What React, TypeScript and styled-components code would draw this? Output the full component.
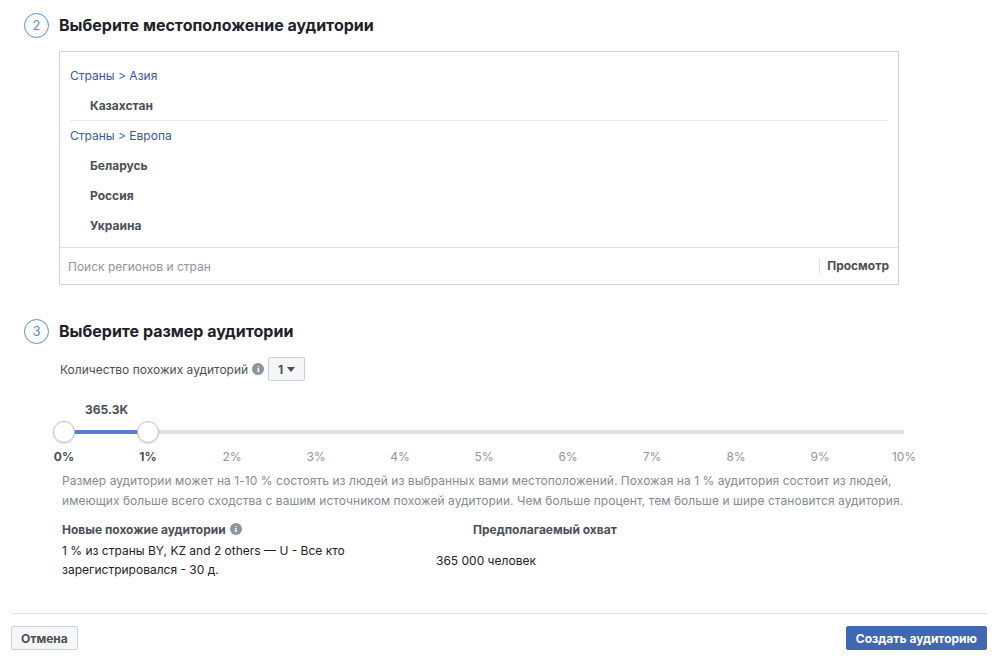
import React from 'react';
import styled, { createGlobalStyle } from 'styled-components';

const GlobalStyle = createGlobalStyle`
    body {
        margin: 0;
        background: #fff;
        font-family: Inter, "Liberation Sans", Helvetica, Arial, sans-serif;
        color: #1d2129;
    }
`;

const Page = styled.div`
    width: 998px;
    height: 663px;
    box-sizing: border-box;
    padding: 12px 11px 0 11px;
    display: flex;
    flex-direction: column;
`;

const Section = styled.section`
    padding-left: 13px;
`;

const StepHeader = styled.div`
    display: flex;
    align-items: center;
    gap: 10px;
    height: 26px;
`;

const StepCircle = styled.div`
    width: 23px;
    height: 23px;
    border: 1.5px solid #5890c8;
    border-radius: 50%;
    display: flex;
    align-items: center;
    justify-content: center;
    color: #5890c8;
    font-size: 13px;
`;

const StepTitle = styled.h2`
    margin: 0;
    font-size: 16px;
    font-weight: bold;
    color: #1d2129;
`;

const LocationBox = styled.div`
    margin: 13px 0 0 35px;
    width: 840px;
    box-sizing: border-box;
    border: 1px solid #ccd0d5;
`;

const LocationList = styled.div`
    padding: 8px 10px 7px 10px;
`;

const Row = styled.div<{ $divider?: boolean }>`
    height: 30px;
    display: flex;
    align-items: center;
    font-size: 12px;
    border-top: ${p => (p.$divider ? '1px solid #e5e5e5' : 'none')};
    box-sizing: border-box;
`;

const Crumb = styled.span`
    color: #385898;
`;

const Country = styled.span`
    padding-left: 20px;
    font-weight: bold;
    color: #4b4f56;
`;

const SearchRow = styled.div`
    height: 36px;
    border-top: 1px solid #dddfe2;
    display: flex;
    align-items: center;
    padding: 0 9px 0 8px;
    font-size: 12px;
`;

const SearchInput = styled.span`
    flex: 1;
    color: #90949c;
`;

const BrowseButton = styled.span`
    border-left: 1px solid #dddfe2;
    padding-left: 7px;
    line-height: 16px;
    font-weight: bold;
    color: #4b4f56;
`;

const SizeSection = styled(Section)`
    margin-top: 33px;
`;

const CountRow = styled.div`
    margin: 13px 0 0 36px;
    display: flex;
    align-items: center;
    gap: 4px;
    font-size: 12px;
    color: #4b4f56;
`;

const InfoIcon = styled.span`
    width: 12px;
    height: 12px;
    border-radius: 50%;
    background: #8d949e;
    color: #fff;
    font-size: 9px;
    font-weight: bold;
    font-family: "Liberation Serif", serif;
    display: inline-flex;
    align-items: center;
    justify-content: center;
`;

const Dropdown = styled.div`
    height: 22px;
    width: 35px;
    box-sizing: content-box;
    border: 1px solid #ccd0d5;
    border-radius: 2px;
    background: #f5f6f7;
    display: flex;
    align-items: center;
    justify-content: center;
    gap: 4px;
    font-weight: bold;
    color: #4b4f56;
`;

const Caret = styled.span`
    width: 0;
    height: 0;
    border-left: 4px solid transparent;
    border-right: 4px solid transparent;
    border-top: 5px solid #4b4f56;
`;

const SliderArea = styled.div`
    margin: 21px 0 0 -2px;
    width: 924px;
`;

const ReachValue = styled.div`
    padding-left: 63px;
    font-size: 12px;
    font-weight: bold;
    color: #4b4f56;
    height: 14px;
`;

const Track = styled.div`
    position: relative;
    margin: 14px 0 0 42px;
    width: 840px;
    height: 4px;
    background: #dddfe2;
`;

const Fill = styled.div`
    height: 100%;
    background: #5b7bd5;
`;

const Knob = styled.div`
    position: absolute;
    top: -9px;
    width: 20px;
    height: 20px;
    margin-left: -11px;
    border-radius: 50%;
    border: 1px solid #bec3c9;
    background: #fff;
    box-shadow: 0 1px 2px rgba(0, 0, 0, 0.12);
`;

const Ticks = styled.div`
    margin-top: 15px;
    display: grid;
    grid-template-columns: repeat(11, 84px);
`;

const Tick = styled.span<{ $active?: boolean }>`
    text-align: center;
    font-size: 12px;
    color: ${p => (p.$active ? '#4b4f56' : '#90949c')};
    font-weight: ${p => (p.$active ? 'bold' : 'normal')};
`;

const Description = styled.p`
    margin: 7px 0 0 38px;
    width: 880px;
    font-size: 12px;
    line-height: 20px;
    letter-spacing: 0.05px;
    color: #858a93;
`;

const Summary = styled.div`
    margin: 10px 0 0 38px;
    display: grid;
    grid-template-columns: 411px 1fr;
    font-size: 12px;
    color: #1d2129;
`;

const SummaryHead = styled.div`
    font-weight: bold;
    color: #4b4f56;
    display: flex;
    align-items: center;
    gap: 4px;
    height: 16px;
`;

const SummaryText = styled.div`
    margin-top: 4px;
    line-height: 19px;
    width: 300px;
`;

const ReachText = styled.div`
    margin: 16px 0 0 -37px;
`;

const Footer = styled.div`
    margin-top: 34px;
    border-top: 1px solid #dddfe2;
    padding-top: 12px;
    display: flex;
    justify-content: space-between;
`;

const Button = styled.button<{ $primary?: boolean }>`
    height: 24px;
    padding: 0 9px;
    font-family: inherit;
    font-size: 12px;
    font-weight: bold;
    border-radius: 2px;
    border: 1px solid ${p => (p.$primary ? '#4267b2' : '#ced0d4')};
    background: ${p => (p.$primary ? '#4267b2' : '#f5f6f7')};
    color: ${p => (p.$primary ? '#fff' : '#4b4f56')};
`;

const ticks = ['0%', '1%', '2%', '3%', '4%', '5%', '6%', '7%', '8%', '9%', '10%'];
const selected = 1;

export default function App() {
    return (
        <Page>
            <GlobalStyle />
            <Section>
                <StepHeader>
                    <StepCircle>2</StepCircle>
                    <StepTitle>Выберите местоположение аудитории</StepTitle>
                </StepHeader>
                <LocationBox>
                    <LocationList>
                        <Row><Crumb>Страны &gt; Азия</Crumb></Row>
                        <Row><Country>Казахстан</Country></Row>
                        <Row $divider><Crumb>Страны &gt; Европа</Crumb></Row>
                        <Row><Country>Беларусь</Country></Row>
                        <Row><Country>Россия</Country></Row>
                        <Row><Country>Украина</Country></Row>
                    </LocationList>
                    <SearchRow>
                        <SearchInput>Поиск регионов и стран</SearchInput>
                        <BrowseButton>Просмотр</BrowseButton>
                    </SearchRow>
                </LocationBox>
            </Section>

            <SizeSection>
                <StepHeader>
                    <StepCircle>3</StepCircle>
                    <StepTitle>Выберите размер аудитории</StepTitle>
                </StepHeader>
                <CountRow>
                    Количество похожих аудиторий
                    <InfoIcon>i</InfoIcon>
                    <Dropdown>1<Caret /></Dropdown>
                </CountRow>
                <SliderArea>
                    <ReachValue>365.3K</ReachValue>
                    <Track>
                        <Fill style={{ width: `${selected * 10}%` }} />
                        <Knob style={{ left: '0%' }} />
                        <Knob style={{ left: `${selected * 10}%` }} />
                    </Track>
                    <Ticks>
                        {ticks.map((t, i) => (
                            <Tick key={t} $active={i <= selected}>{t}</Tick>
                        ))}
                    </Ticks>
                </SliderArea>
                <Description>
                    Размер аудитории может на 1-10 % состоять из людей из выбранных вами местоположений. Похожая на 1 % аудитория состоит из людей,
                    <br />
                    имеющих больше всего сходства с вашим источником похожей аудитории. Чем больше процент, тем больше и шире становится аудитория.
                </Description>
                <Summary>
                    <div>
                        <SummaryHead>Новые похожие аудитории<InfoIcon>i</InfoIcon></SummaryHead>
                        <SummaryText>1 % из страны BY, KZ and 2 others — U - Все кто зарегистрировался - 30 д.</SummaryText>
                    </div>
                    <div>
                        <SummaryHead>Предполагаемый охват</SummaryHead>
                        <ReachText>365 000 человек</ReachText>
                    </div>
                </Summary>
            </SizeSection>

            <Footer>
                <Button>Отмена</Button>
                <Button $primary>Создать аудиторию</Button>
            </Footer>
        </Page>
    );
}
